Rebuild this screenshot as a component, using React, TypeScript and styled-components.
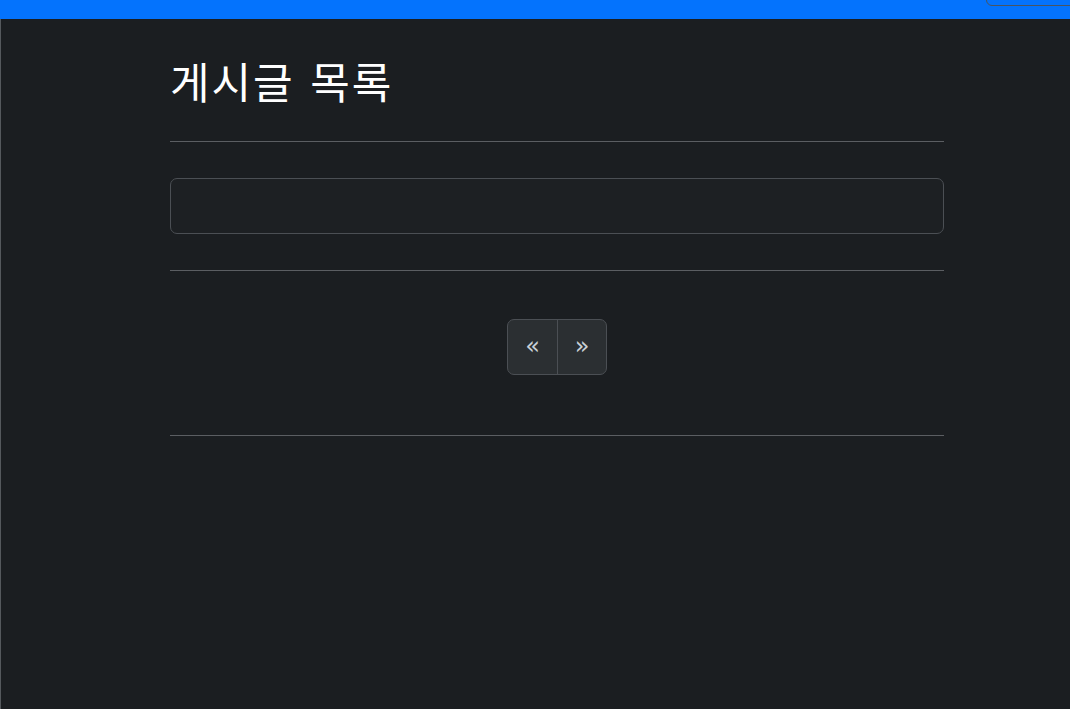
import React from 'react';
import styled, { createGlobalStyle } from 'styled-components';

const GlobalStyle = createGlobalStyle`
  html, body { margin: 0; padding: 0; background: #1b1e21; }
  body {
    font-family: "Noto Sans", "Noto Sans CJK KR", sans-serif;
    color: #dee2e6;
  }
`;

const Page = styled.div`
  min-height: 709px;
  display: flex;
  flex-direction: column;
  background: #1b1e21;
`;

const TopBar = styled.div`
  height: 19px;
  background: #0473fd;
  position: relative;
`;

// little tab peeking out at the top right
const CornerTab = styled.div`
  position: absolute;
  top: -2px;
  right: -2px;
  width: 84px;
  height: 6px;
  border: 1px solid #4a5560;
  border-radius: 0 0 0 6px;
`;

const Body = styled.div`
  flex: 1;
  border-left: 1px solid #55595d;
`;

const Container = styled.main`
  width: 774px;
  margin-left: 169px;
  padding-top: 35px;
`;

const Title = styled.h1`
  margin: 0 0 35px;
  font-family: "Noto Sans CJK KR", sans-serif;
  font-weight: 400;
  font-size: 43px;
  line-height: 52px;
  color: #ffffff;
  letter-spacing: 2px;
  word-spacing: 4px;
`;

const Rule = styled.hr<{ $below: number }>`
  border: 0;
  border-top: 1px solid #5b5e62;
  margin: 0 0 ${p => p.$below}px;
`;

const PostCard = styled.div`
  height: 54px;
  margin-bottom: 36px;
  border: 1px solid #4b4f54;
  border-radius: 7px;
  background: #1d2023;
`;

const PagerRow = styled.nav`
  display: flex;
  justify-content: center;
  margin-bottom: 60px;
`;

const Pager = styled.div`
  display: flex;
  border: 1px solid #4b4f54;
  border-radius: 7px;
  overflow: hidden;
  background: #2b2f32;
`;

const PageButton = styled.button`
  width: 49px;
  height: 54px;
  border: 0;
  background: transparent;
  color: #c9d0d6;
  font-family: "DejaVu Sans", sans-serif;
  font-size: 24px;
  padding: 0 0 3px;
  cursor: pointer;
  & + & { border-left: 1px solid #4b4f54; }
`;

export default function App() {
  return (
    <>
      <GlobalStyle />
      <Page>
        <TopBar>
          <CornerTab />
        </TopBar>
        <Body>
          <Container>
            <Title>게시글 목록</Title>
            <Rule $below={36} />
            <PostCard />
            <Rule $below={48} />
            <PagerRow>
              <Pager>
                <PageButton aria-label="Previous">«</PageButton>
                <PageButton aria-label="Next">»</PageButton>
              </Pager>
            </PagerRow>
            <Rule $below={0} />
          </Container>
        </Body>
      </Page>
    </>
  );
}
